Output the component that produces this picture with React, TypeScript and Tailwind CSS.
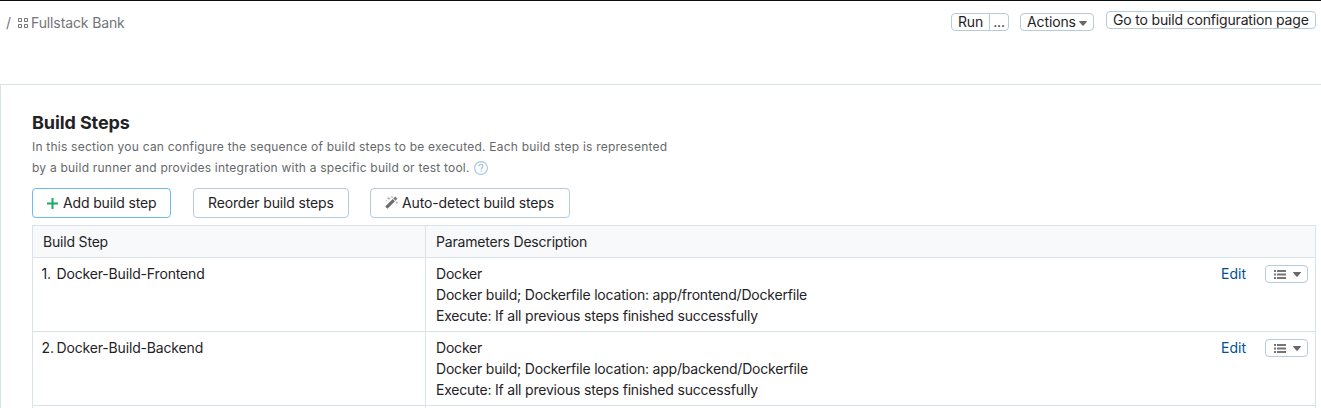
import type { ReactNode } from "react";

function Caret() {
  return (
    <svg width="8" height="5" viewBox="0 0 8 5" className="shrink-0" aria-hidden="true">
      <path d="M0.5 0h7a.5.5 0 0 1 .35.8L4.6 4.4a.8.8 0 0 1-1.2 0L.15.8A.5.5 0 0 1 .5 0Z" fill="#686868" />
    </svg>
  );
}

function ProjectIcon() {
  return (
    <svg width="10" height="10" viewBox="0 0 10 10" fill="none" stroke="#737577" aria-hidden="true">
      <path d="M.5.5h3v3h-3zM6.5.5h3v3h-3zM.5 6.5h3v3h-3zM6.5 6.5h3v3h-3z" />
    </svg>
  );
}

function HelpIcon() {
  return (
    <svg width="14" height="14" viewBox="0 0 14 14" fill="none" stroke="#9fc6e3" aria-hidden="true">
      <circle cx="7" cy="7" r="6.4" strokeWidth="1.1" />
      <path d="M5 5.4c0-1.2.8-2 2-2s2 .8 2 1.9c0 1.4-1.9 1.5-1.9 3.1" strokeWidth="1.2" />
      <path d="M7.1 9.4v1.3" strokeWidth="1.3" />
    </svg>
  );
}

function WandIcon() {
  return (
    <svg width="13" height="13" viewBox="0 0 13 13" aria-hidden="true">
      <path d="M1.3 11.7 8.9 4.1" stroke="#6a6c6e" strokeWidth="3.1" />
      <path d="m9.3 3.7 2-2" stroke="#77797b" strokeWidth="3.1" />
      <path d="m8.2 2.9 1.9 1.9" stroke="#e2e2e2" strokeWidth=".7" />
      <path d="M3.8.7v3.4M2.1 2.4h3.4M7 .2v1.6M6.2 1h1.6M11.8 5.6v2M10.8 6.6h2M1.2 4v1.2" stroke="#a3a5a7" strokeWidth=".7" />
    </svg>
  );
}

function ListIcon() {
  return (
    <svg width="12" height="9" viewBox="0 0 12 9" fill="#737577" aria-hidden="true">
      <path d="M0 0h2v2H0zM3 0h9v2H3zM0 3.5h2v2H0zM3 3.5h9v2H3zM0 7h2v2H0zM3 7h9v2H3z" />
    </svg>
  );
}

function BigButton({ className, children }: { className: string; children: ReactNode }) {
  return (
    <button className={`flex h-[30px] items-center rounded-[4px] border bg-white pb-0.5 tracking-[-0.14px] whitespace-nowrap ${className}`}>
      {children}
    </button>
  );
}

const steps = [
  { number: "1.", name: "Docker-Build-Frontend", path: "app/frontend/Dockerfile" },
  { number: "2.", name: "Docker-Build-Backend", path: "app/backend/Dockerfile" },
];

export default function App() {
  return (
    <div className="flex h-[408px] w-[1321px] flex-col overflow-hidden border-t border-[#0c0c0c] bg-white font-['Inter',sans-serif] text-[14px] leading-[21px] tracking-[-0.19px] text-[#1f2326]">
      <header className="flex h-[83px] shrink-0 items-start justify-between pr-[5px] pl-[6px] whitespace-nowrap">
        <div className="mt-[11px] flex h-[21px] items-center tracking-[-0.12px] text-[#737577]">
          <span className="w-[12px]">/</span>
          <span className="pt-px">
            <ProjectIcon />
          </span>
          <span className="ml-[3px]">Fullstack Bank</span>
        </div>
        <div className="flex items-start leading-4 text-[#1f2326]">
          <div className="mt-3 flex h-[18px] w-[58px] rounded-[4px] border border-[#b6cbdb]">
            <button className="flex w-[38px] justify-center border-r border-[#b6cbdb]">Run</button>
            <button className="flex flex-1 justify-center">...</button>
          </div>
          <button className="mt-3 ml-[11px] flex h-[18px] w-[74px] gap-[3px] rounded-[4px] border border-[#b6cbdb] pl-[6px] tracking-[-0.12px]">
            <span>Actions</span>
            <span className="pt-[7px]">
              <Caret />
            </span>
          </button>
          <button className="mt-[10px] ml-[12px] flex h-[18px] w-[210px] rounded-[4px] border border-[#b6cbdb] pl-[6px] tracking-[-0.17px]">
            Go to build configuration page
          </button>
        </div>
      </header>
      <main className="flex-1 border-t border-l border-[#d9e1e9] pt-[25px] pr-[5px] pl-[31px]">
        <h1 className="h-[26px] text-[18px] leading-[25px] font-bold tracking-[-0.1px]">Build Steps</h1>
        <div className="text-[12px] leading-[21px] tracking-[0.225px] whitespace-nowrap text-[#66696b]">
          <p>In this section you can configure the sequence of build steps to be executed. Each build step is represented</p>
          <p className="flex items-center gap-[4px]">
            by a build runner and provides integration with a specific build or test tool.
            <HelpIcon />
          </p>
        </div>
        <div className="mt-[10px] flex">
          <BigButton className="w-[139px] border-[#6db9f2] pl-[14px]">
            <span className="pt-0.5">
              <svg width="11" height="11" viewBox="0 0 11 11" stroke="#1bab68" strokeWidth="2" aria-hidden="true">
                <path d="M5.5 0v11M0 5.5h11" />
              </svg>
            </span>
            <span className="ml-[5px]">Add build step</span>
          </BigButton>
          <BigButton className="ml-[22px] w-[156px] border-[#b6cbdb] pl-[14px]">Reorder build steps</BigButton>
          <BigButton className="ml-[21px] w-[200px] border-[#b6cbdb] pl-[14px]">
            <WandIcon />
            <span className="ml-[4px]">Auto-detect build steps</span>
          </BigButton>
        </div>
        <div className="mt-[7px] h-[200px] border border-[#d9e1e9]">
          <div className="flex h-8 border-b border-[#d9e1e9] bg-[#f7f9fa]">
            <div className="w-[393px] border-r border-[#d9e1e9] pt-[5px] pl-[10px]">Build Step</div>
            <div className="flex-1 pt-[5px] pl-[10px]">Parameters Description</div>
          </div>
          {steps.map((step) => (
            <div key={step.name} className="flex h-[74px] border-b border-[#d9e1e9]">
              <div className="flex w-[393px] border-r border-[#d9e1e9] pt-[5px] pl-[8.5px] tracking-[-0.16px]">
                <span className="w-[15px]">{step.number}</span>
                {step.name}
              </div>
              <div className="flex-1 pt-[5px] pl-[10px] tracking-[-0.2px] whitespace-nowrap">
                <p>Docker</p>
                <p>Docker build; Dockerfile location: {step.path}</p>
                <p>Execute: If all previous steps finished successfully</p>
              </div>
              <a className="mt-[5px] w-[44px] tracking-normal text-[#00528f]">Edit</a>
              <button className="mt-[7px] mr-[7px] flex h-[18px] w-[43px] items-center rounded-[4px] border border-[#b6cbdb] pt-px pl-2">
                <ListIcon />
                <span className="ml-[7px]">
                  <Caret />
                </span>
              </button>
            </div>
          ))}
          <div className="h-4 w-[393px] border-r border-[#d9e1e9]" />
        </div>
      </main>
    </div>
  );
}
